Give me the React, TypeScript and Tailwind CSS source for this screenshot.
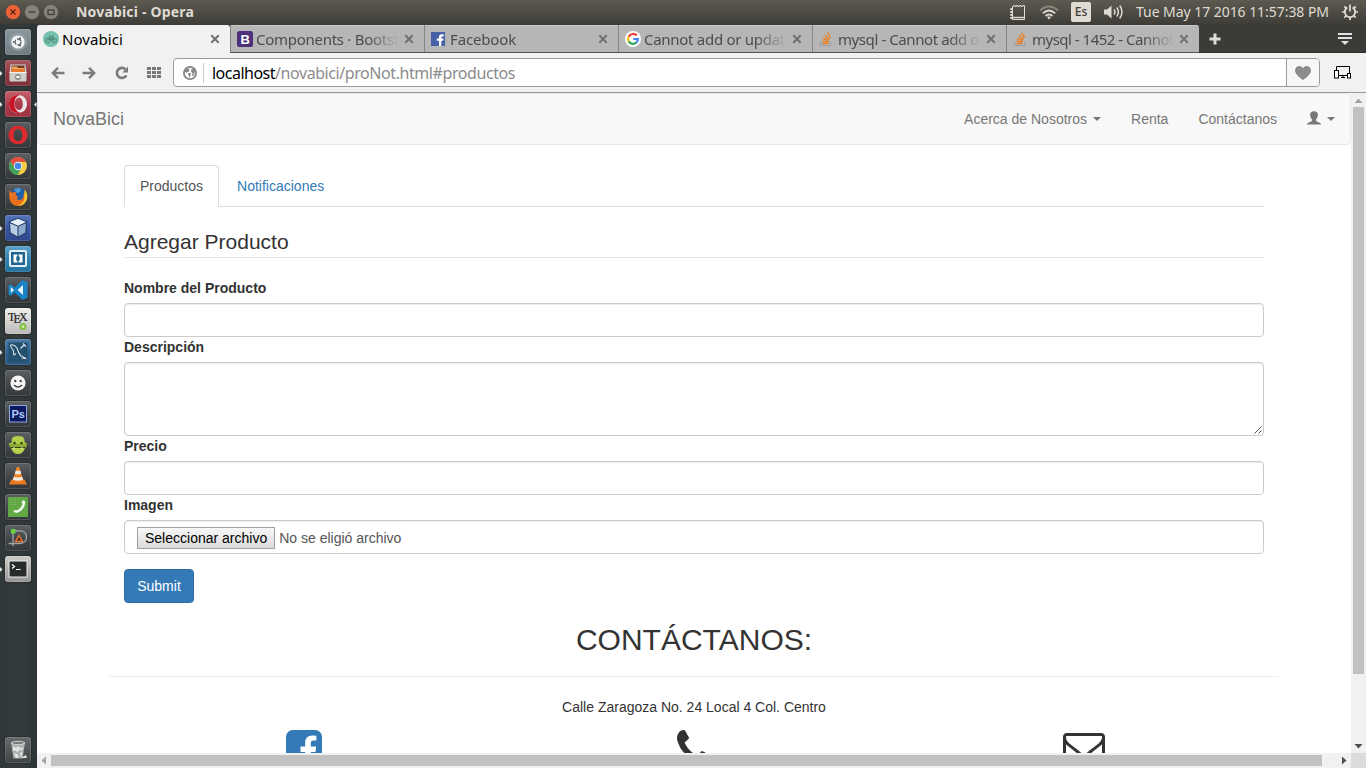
import { useLayoutEffect, useRef, type ReactNode } from "react";

/** Text whose letter spacing is set so that it fills a given width. */
function FitText({ width, className = "", children }: { width: number; className?: string; children: string }) {
  const ref = useRef<HTMLSpanElement>(null);
  useLayoutEffect(() => {
    const el = ref.current;
    if (!el) return;
    el.style.letterSpacing = "0px";
    const natural = el.getBoundingClientRect().width;
    el.style.letterSpacing = `${(width - natural) / children.length}px`;
  }, [width, children]);
  return (
    <span ref={ref} className={`inline-block whitespace-pre ${className}`}>
      {children}
    </span>
  );
}

const UI = "font-['Noto_Sans','Open_Sans',sans-serif]";

/* ---------- Launcher ---------- */

type App = { name: string; tile: string; running?: boolean; focused?: boolean; icon: ReactNode };

const DARK = "bg-linear-to-b from-[#5d6062] via-[#444749] to-[#35383a]";

const apps: App[] = [
  {
    name: "Dash",
    tile: "bg-linear-to-b from-[#8b989e] to-[#6d7b82]",
    icon: (
      <>
        <circle cx="13" cy="13" r="9" fill="#a9b4b9" opacity=".45" />
        <circle cx="13" cy="13" r="6.6" fill="#f4f6f6" />
        <circle cx="13" cy="13" r="3" fill="none" stroke="#5d686d" strokeWidth="1.3" strokeDasharray="5.2 1.1" />
        <circle cx="8.9" cy="13" r="1.1" fill="#5d686d" />
        <circle cx="15" cy="9.4" r="1.1" fill="#5d686d" />
        <circle cx="15" cy="16.6" r="1.1" fill="#5d686d" />
      </>
    ),
  },
  {
    name: "Files",
    tile: "bg-linear-to-b from-[#a95860] via-[#8b3843] to-[#7c303b]",
    running: true,
    icon: (
      <>
        <path d="M5.5 4.500h15l1 8h-17z" fill="#d7d3cc" />
        <path d="M6.500 5.500h13V12h-13z" fill="#6c3a22" />
        <path d="M7 6.500h5l1 1.500h6V12H7z" fill="#f2a55b" />
        <path d="M6.500 9h13v3h-13z" fill="#e8792d" />
        <rect x="4.500" y="12" width="17" height="9.500" rx="1" fill="#cfcdc8" />
        <path d="M4.500 12.500h17" stroke="#f3f2ef" />
        <circle cx="13" cy="17" r="3" fill="#8d8c88" />
        <path d="M11 16h4l-.5 2h-3z" fill="#f5f5f3" />
      </>
    ),
  },
  {
    name: "Opera",
    tile: "bg-linear-to-b from-[#c2636e] via-[#ad3b4a] to-[#9c3341]",
    running: true,
    focused: true,
    icon: (
      <>
        <path fillRule="evenodd" d="M13 4C7.500 4 4 8 4 13s3.500 9 9 9 9-4 9-9-3.500-9-9-9zm1 2.500c2.500 0 3.800 3 3.800 6.500s-1.300 6-3.800 6-4.300-2.800-4.300-6S11.500 6.500 14 6.500z" fill="#e9e5e6" />
        <path d="M13 4C7.500 4 4 8 4 13s3.500 9 9 9l2.500-.4c-3.800-.5-6-4-6-8.600S11 5.200 14.500 4.200z" fill="#c81427" />
      </>
    ),
  },
  {
    name: "Opera browser",
    tile: DARK,
    icon: (
      <path
        fillRule="evenodd"
        d="M13 3.700C7.500 3.700 3.500 7.800 3.500 13s4 9.300 9.500 9.300 9.500-4.100 9.500-9.300-4-9.300-9.500-9.300zm0 3.100c2.600 0 4.300 2.800 4.300 6.200s-1.700 6.200-4.300 6.200-4.300-2.800-4.300-6.200 1.700-6.200 4.300-6.200z"
        fill="#dc2a2e"
      />
    ),
  },
  {
    name: "Chrome",
    tile: DARK,
    icon: (
      <>
        <circle cx="13" cy="13" r="9" fill="#f7cf45" />
        <path d="M5.300 8.300A9 9 0 0 1 21 9H13a4 4 0 0 0-3.600 5.600z" fill="#de4f41" />
        <path d="M5.300 8.300A9 9 0 0 0 12.600 22l3.700-6.800A4 4 0 0 1 9.500 15z" fill="#3fa25a" />
        <circle cx="13" cy="13" r="4.200" fill="#f3f5f3" />
        <circle cx="13" cy="13" r="3.300" fill="#4587e8" />
      </>
    ),
  },
  {
    name: "Firefox",
    tile: DARK,
    icon: (
      <>
        <circle cx="13.500" cy="12.500" r="8.500" fill="#1f5faa" />
        <path d="M9 5.500q3-2.500 7-1l-1 3.500-3 1z" fill="#4f9bd6" />
        <path d="M4.500 6.500 7.500 9q2-1.500 4-.5L10.500 11l3 2-2 1.500q1.500 2.300 4.500 1 3-1.600 2.500-5 2-1 1.500-4 3.500 5 1 10-2.500 5.500-8 5.500-7 0-8.500-7.500-.6-4 0-8z" fill="#e9701c" />
        <path d="M19.500 5.500q4.500 5.500 2 11-2.500 5-8 5.500 6-3.500 5.800-9z" fill="#f9c52b" />
      </>
    ),
  },
  {
    name: "VirtualBox",
    tile: "bg-linear-to-b from-[#5775b8] via-[#3856a0] to-[#2d478b]",
    running: true,
    icon: (
      <>
        <path d="m13 2.800 9 3.700-.7 11.500L13 23l-8.300-5L4 6.500z" fill="#1d3566" />
        <path d="m13 3.800 8 3.200-8 3.700L5 7z" fill="#e9f1f8" />
        <path d="M5 8.200l7.500 3.300V21.500L5.700 17.500z" fill="#b7cbe2" />
        <path d="m21 8.200-7.500 3.300V21.500l6.800-4z" fill="#8ba9cb" />
      </>
    ),
  },
  {
    name: "Brackets",
    tile: "bg-linear-to-b from-[#5da4c9] via-[#2f82ae] to-[#24719c]",
    running: true,
    icon: (
      <>
        <rect x="5" y="5" width="16" height="15" rx="1" fill="#1e6690" stroke="#e4eff5" strokeWidth="2" />
        <rect x="8.500" y="8.500" width="9" height="8" fill="#fff" />
        <path d="M11.300 10.500h3.400v4h-3.400zM12.300 8.500h1.400v8h-1.400z" fill="#1e6690" />
      </>
    ),
  },
  {
    name: "Visual Studio Code",
    tile: DARK,
    icon: (
      <>
        <path d="M17.500 3 22.500 5.200v15.600L17.500 23l-7.800-7.500-3.900 3.300L3.500 17.500v-9l2.300-1.300 3.900 3.300z" fill="#1a82c6" />
        <path d="m18 8-5.500 5L18 18zM5.800 10v6L9 13z" fill="#e9f4fb" />
      </>
    ),
  },
  {
    name: "TeX",
    tile: "bg-linear-to-b from-[#f0f0ee] to-[#b9bab7]",
    icon: (
      <>
        <g fontFamily="Liberation Serif" fontSize="12" fill="#222" stroke="#222" strokeWidth=".2">
          <text x="3" y="12.500">T</text>
          <text x="8.500" y="14.500">E</text>
          <text x="14" y="12.500">X</text>
        </g>
        <circle cx="18" cy="18.500" r="3.500" fill="#83bd45" />
        <circle cx="18" cy="18.500" r="1.500" fill="#c9e4a5" />
      </>
    ),
  },
  {
    name: "MySQL Workbench",
    tile: "bg-linear-to-b from-[#4b7da7] via-[#2f618d] to-[#265780]",
    running: true,
    icon: (
      <>
        <path d="M3.500 3.500h19v19h-19z" fill="#24506f" />
        <path d="M5.500 6q3.500-1 6.500 3 1.500 5.500 4 8 2.500.5 4.500 2.500l-4-.5M5.500 6q.5 3.500 2.500 4.500l1 5.500 2-1.500M15.500 9.500l4-4M18 4.500l3 3" fill="none" stroke="#d7e3ec" strokeWidth="1.100" />
      </>
    ),
  },
  {
    name: "Empathy",
    tile: DARK,
    icon: (
      <>
        <circle cx="13" cy="13" r="7.600" fill="#f5f5f5" />
        <circle cx="10.300" cy="11" r="1.200" fill="#444" />
        <circle cx="15.700" cy="11" r="1.200" fill="#444" />
        <path d="M9 15q4 4 8 0" fill="none" stroke="#444" strokeWidth="1.300" />
      </>
    ),
  },
  {
    name: "Photoshop",
    tile: DARK,
    icon: (
      <>
        <rect x="4.500" y="4.500" width="17" height="16.500" fill="#0b1a5e" stroke="#8ba7e8" strokeWidth="1" />
        <text x="6.500" y="17" fontFamily="Liberation Sans" fontWeight="bold" fontSize="11" fill="#b4cbfb">Ps</text>
      </>
    ),
  },
  {
    name: "Monster",
    tile: DARK,
    icon: (
      <>
        <path d="M7 10q-1-4 2-5.500 4-1 8 0 3 1.500 2.500 5.500l2 1.500-1.500 4.500q-2 6-7 6t-7-6L4.500 11.500z" fill="#b4cf4c" />
        <path d="M3.500 11.500h19L21 16H5z" fill="#8eac34" />
        <circle cx="9.500" cy="11" r="1.200" fill="#26340c" />
        <circle cx="16.500" cy="11" r="1.200" fill="#26340c" />
        <path d="M5.500 15.500h15" stroke="#26340c" strokeWidth=".9" />
        <path d="m8 15.500 1 2 1-2zM16 15.500l1 2 1-2z" fill="#fff" />
      </>
    ),
  },
  {
    name: "VLC",
    tile: DARK,
    icon: (
      <>
        <path d="M6.500 16.500h13L22 21.500H4z" fill="#e67920" />
        <path d="M11.800 4h2.400l4.300 14q-5.500 2.300-11 0z" fill="#f18425" />
        <path d="m10.800 7.500-1 3.200q3.200 1.200 6.400 0l-1-3.200q-2.200.9-4.400 0zM8.800 13.700l-.9 3q5 1.900 10.200 0l-.9-3q-4.200 1.600-8.400 0z" fill="#eeebe7" />
      </>
    ),
  },
  {
    name: "Phone",
    tile: DARK,
    icon: (
      <>
        <rect x="3" y="3" width="20" height="20" fill="#62a844" />
        <path d="M5 5.500h7M5 8h7M5 10.500h6" fill="none" stroke="#85c16d" strokeDasharray="1 1.500" />
        <path d="m18 6 2.200 1.500q.3 8-8.200 11.500L8.500 18l.8-2 2.700.3q4.500-2.300 5.500-6.300l-1-1.500z" fill="#f1f8ed" />
      </>
    ),
  },
  {
    name: "Draw",
    tile: DARK,
    icon: (
      <>
        <path d="M8 7v14M3.500 18.500h10q8 0 8-6.500t-8-6H8" fill="none" stroke="#9fa3a3" strokeWidth="1.300" />
        <rect x="6" y="4" width="4.500" height="4.500" fill="#69d344" />
        <path d="m14 10.500 3.500 6h-7z" fill="#4b2d20" stroke="#ea7435" strokeWidth="1.400" />
      </>
    ),
  },
  {
    name: "Terminal",
    tile: "bg-linear-to-b from-[#cbcbc9] to-[#969694]",
    running: true,
    icon: (
      <>
        <rect x="4" y="5" width="18" height="16" fill="#292c2d" stroke="#efefed" strokeWidth="1" />
        <path d="m7 8.500 2.500 2L7 12.500M11 13.500h4.500" fill="none" stroke="#fff" strokeWidth="1.200" />
      </>
    ),
  },
];

function Tile({ tile, icon }: { tile: string; icon: ReactNode }) {
  return (
    <div className={`h-[26px] w-[26px] overflow-hidden rounded-[3px] shadow-[inset_0_0_0_1px_rgba(255,255,255,0.13),0_0_2px_rgba(0,0,0,0.6)] ${tile}`}>
      <svg viewBox="0 0 26 26" className="h-[26px] w-[26px]">
        {icon}
      </svg>
    </div>
  );
}

function Launcher() {
  return (
    <aside className="flex w-[37px] shrink-0 flex-col bg-linear-to-r from-[#303739] via-[#343b3d] to-[#2d3436] pt-[5px] pb-[5px]">
      <div className="flex flex-col gap-[5px]">
        {apps.map((app) => (
          <div key={app.name} className="flex h-[26px] items-center">
            <span className="flex w-[5px] items-center">
              {app.running && (
                <svg viewBox="0 0 3 6" className="h-[5px] w-[2.500px]">
                  <path d="M0 0 3 3 0 6z" fill="#e8e8e8" />
                </svg>
              )}
            </span>
            <Tile tile={app.tile} icon={app.icon} />
            {app.focused && (
              <svg viewBox="0 0 3 6" className="ml-[3px] h-[5px] w-[2.500px]">
                <path d="M3 0 0 3l3 3z" fill="#e8e8e8" />
              </svg>
            )}
          </div>
        ))}
      </div>
      <div className="mt-auto pl-[5px]">
        <Tile
          tile="bg-linear-to-b from-[#676a6b] to-[#3f4344]"
          icon={
            <>
              <path d="M6 5.500h14l-2.500 16h-9z" fill="#aeb1b1" />
              <path d="m8 9 3 2 2-2 3 2.500 2-2-.5 4-3-1-2 2.500-3-2-1.500 1.500zM9 16l3 1 2 3-3 1zM15 16l2.500-1-1 5z" fill="#e5e6e6" />
              <ellipse cx="13" cy="5.800" rx="7.200" ry="2" fill="#d4d6d6" />
              <ellipse cx="13" cy="5.900" rx="5.600" ry="1.100" fill="#777b7b" />
              <path d="m17 20 4-2 1 3h-5z" fill="#dedfdf" />
            </>
          }
        />
      </div>
    </aside>
  );
}

/* ---------- System bar ---------- */

function WindowButton({ kind }: { kind: "close" | "min" | "max" }) {
  return (
    <svg viewBox="0 0 16 16" className="h-4 w-4">
      <circle cx="8" cy="8" r="7.500" fill={kind === "close" ? "#ee6338" : "#85827a"} stroke="#4a4842" strokeWidth=".6" />
      {kind === "close" && <path d="m5.500 5.500 5 5m0-5-5 5" stroke="#57240f" strokeWidth="1.300" />}
      {kind === "min" && <path d="M4.500 8h7" stroke="#3b3a35" strokeWidth="1.200" />}
      {kind === "max" && <rect x="5" y="6" width="6" height="4.500" fill="none" stroke="#3b3a35" strokeWidth="1.200" />}
    </svg>
  );
}

function SystemBar() {
  return (
    <header className={`flex h-6 shrink-0 items-center bg-linear-to-b from-[#5d5a50] to-[#3e3d38] text-[#dfdbd2] ${UI}`}>
      <div className="flex gap-[3px] pl-[5px]">
        <WindowButton kind="close" />
        <WindowButton kind="min" />
        <WindowButton kind="max" />
      </div>
      <FitText width={118} className="ml-[17px] text-[14px] leading-6 font-bold">
        Novabici - Opera
      </FitText>
      <div className="ml-auto flex items-center">
        <svg viewBox="0 0 17 17" className="h-[17px] w-[17px]" fill="none" stroke="#dfdbd2">
          <path d="M3.500 15.500V2.500h1v-1h1.500v1h1.500v-1H9v1h1.500v-1H12v1h1.500v-1h2v14z" />
          <path d="M3.500 4.500h-2v1h2m0 2h-2v1h2m0 2h-2v1h2m0 2h-2v1h2" />
          <path d="M4 13.500h11" strokeWidth="1.500" />
        </svg>
        <svg viewBox="0 0 20 15" className="ml-[13px] h-[15px] w-5" fill="none" strokeWidth="1.700">
          <path d="M1 5.500q9-8 18 0" stroke="#8b887e" />
          <path d="M3.800 8.300q6.200-5.600 12.400 0" stroke="#dfdbd2" />
          <path d="M6.500 11q3.500-3 7 0" stroke="#dfdbd2" />
          <path d="m8 12.300 2 2.200 2-2.200q-2-1.400-4 0z" fill="#dfdbd2" stroke="none" />
        </svg>
        <span className="ml-[12px] flex h-5 w-5 items-center justify-center rounded-[2px] bg-[#dfdbd2] text-[12px] font-medium text-[#3e3d38]">
          Es
        </span>
        <svg viewBox="0 0 21 16" className="ml-[12px] h-4 w-[21px]" fill="none" stroke="#dfdbd2" strokeWidth="1.500">
          <path d="M1 5.500h3l4.500-4v13L4 10.500H1z" fill="#dfdbd2" stroke="none" />
          <path d="M11 5.500q1.800 2.500 0 5M13.800 3.500q3.200 4.500 0 9M16.700 1.500q4.600 6.500 0 13" />
        </svg>
        <FitText width={193} className="ml-[12px] text-[14px] leading-6">
          Tue May 17 2016 11:57:38 PM
        </FitText>
        <svg viewBox="0 0 18 18" className="mr-[7px] ml-[12px] h-[18px] w-[18px]" fill="none" stroke="#dfdbd2">
          <path d="M6.400 4.400a5.200 5.200 0 1 0 5.200 0" strokeWidth="1.900" />
          <path d="M9 1.500v7M1 9h3M14 9h3M3.300 3.300l2 2M14.700 3.300l-2 2M3.300 14.700l2-2M14.700 14.700l-2-2M9 14v3" strokeWidth="1.700" />
        </svg>
      </div>
    </header>
  );
}

/* ---------- Browser tabs ---------- */

function CloseMark() {
  return (
    <svg viewBox="0 0 10 10" className="h-[10px] w-[10px]">
      <path d="m1.300 1.300 7.400 7.400m0-7.400-7.400 7.400" stroke="#707070" strokeWidth="2" />
    </svg>
  );
}

const StackIcon = (
  <svg viewBox="0 0 16 16" className="h-4 w-4" fill="none">
    <path d="M1.500 10.500v4h10v-4" stroke="#9aa0a6" strokeWidth="1.200" />
    <path d="M3.500 12.500h6M3.600 10.200l6 .7M4.200 7.500l5.700 2M5.700 4.500l5 3.700M8.300 1.700l3.400 5" stroke="#ee7d20" strokeWidth="1.400" />
  </svg>
);

const tabs: { title: string; width: number; icon: ReactNode }[] = [
  {
    title: "Components · Bootst",
    width: 143,
    icon: (
      <svg viewBox="0 0 16 16" className="h-4 w-4">
        <rect width="16" height="16" rx="2.500" fill="#4e3178" />
        <text x="3.500" y="13" fontFamily="Liberation Sans" fontWeight="bold" fontSize="13" fill="#fff">B</text>
      </svg>
    ),
  },
  {
    title: "Facebook",
    width: 66,
    icon: (
      <svg viewBox="0 0 14 14" className="h-[14px] w-[14px]">
        <rect width="14" height="14" fill="#4661a5" />
        <path d="M8 14V8.700H5.800V6.500H8V5q0-2.700 2.700-2.700h2V4.500h-1.400q-1 0-1 1v1h2.200l-.3 2.200h-1.900V14z" fill="#fff" />
      </svg>
    ),
  },
  {
    title: "Cannot add or updat",
    width: 141,
    icon: (
      <svg viewBox="0 0 16 16" className="h-4 w-4">
        <circle cx="8" cy="8" r="8" fill="#fff" />
        <g fill="none" strokeWidth="2.200">
          <path d="M11.800 4.500A5 5 0 0 0 3.700 5.700" stroke="#ea4335" />
          <path d="M3.700 5.700a5 5 0 0 0 0 4.700" stroke="#fbbc05" />
          <path d="M3.700 10.400a5 5 0 0 0 7.600 1.300" stroke="#34a853" />
          <path d="M11.300 11.700A5 5 0 0 0 12.900 8H8.300" stroke="#4285f4" />
        </g>
      </svg>
    ),
  },
  { title: "mysql - Cannot add o", width: 141, icon: StackIcon },
  { title: "mysql - 1452 - Cannot", width: 142, icon: StackIcon },
];

function TabStrip() {
  return (
    <div className={`flex h-[29px] shrink-0 bg-[#3c3b37] pt-px text-[15px] ${UI}`}>
      <div className="flex h-7 w-[193px] items-center rounded-t-[3px] bg-[#f1f1f1] pr-[10px] pl-[6px] text-black">
        <svg viewBox="0 0 16 16" className="h-4 w-4 shrink-0">
          <circle cx="8" cy="8" r="8" fill="#74c1ad" />
          <g fill="none" stroke="#4b7f75" strokeWidth=".9">
            <circle cx="4.700" cy="9.500" r="2.200" />
            <circle cx="11.300" cy="9.500" r="2.200" />
            <path d="M4.700 9.500 6.500 6h3l1.800 3.500M6.500 6 8 9.500 9.500 6M6 5h1.500m1.500 0h2" />
          </g>
        </svg>
        <FitText width={61} className="ml-[3px] pt-px">
          Novabici
        </FitText>
        <span className="ml-auto">
          <CloseMark />
        </span>
      </div>
      <div className="flex h-7 overflow-hidden rounded-tr-[3px] border-b border-[#555]">
        {tabs.map((tab) => (
          <div key={tab.title} className="flex w-[194px] items-center border-l border-[#858585] bg-[#b6b6b6] pr-[10px] pl-[6px] text-[#4c4c4c] shadow-[inset_0_1px_0_#c9c9c9] last:w-[193px]">
            <span className="w-4 shrink-0">{tab.icon}</span>
            <span className="ml-[3px] w-[143px] overflow-hidden pt-[2px] mask-[linear-gradient(to_right,black_78%,transparent_100%)]">
              <FitText width={tab.width}>{tab.title}</FitText>
            </span>
            <span className="-mr-px ml-auto last:mr-0">
              <CloseMark />
            </span>
          </div>
        ))}
      </div>
      <div className="flex flex-1 items-center justify-between border-b border-[#2e2d2a] pr-[14px] pl-[10px]">
        <svg viewBox="0 0 12 12" className="h-3 w-3">
          <path d="M6 .5v11M.5 6h11" stroke="#ddd" strokeWidth="3" />
        </svg>
        <svg viewBox="0 0 14 12" className="h-3 w-[14px]" fill="#e2e2e2">
          <path d="M0 0h14v2H0zM0 4h14v2H0zM3 8h8l-4 4z" />
        </svg>
      </div>
    </div>
  );
}

/* ---------- Address bar ---------- */

function Toolbar() {
  return (
    <div className="flex h-10 shrink-0 items-center border-b border-[#999] bg-[#f1f1f1] pr-[15px] pl-[14px]">
      <svg viewBox="0 0 14 12" className="h-3 w-[14px]" fill="none" stroke="#7b7b7b" strokeWidth="2.400">
        <path d="M13.500 6H2M7 .8 1.800 6 7 11.200" />
      </svg>
      <svg viewBox="0 0 14 12" className="ml-[17px] h-3 w-[14px]" fill="none" stroke="#7b7b7b" strokeWidth="2.400">
        <path d="M.5 6H12M7 .8 12.200 6 7 11.200" />
      </svg>
      <svg viewBox="0 0 14 14" className="ml-[19px] h-[14px] w-[14px]">
        <path d="M11.300 9.300A5 5 0 1 1 10.300 3.300" fill="none" stroke="#7b7b7b" strokeWidth="2.700" />
        <path d="M13 .5v6H7.300z" fill="#7b7b7b" />
      </svg>
      <svg viewBox="0 0 14 11" className="ml-[18px] h-[11px] w-[14px]" fill="#777">
        {[0, 4, 8].map((y) =>
          [0, 5, 10].map((x) => <rect key={`${x}-${y}`} x={x} y={y} width="4" height="3" />),
        )}
      </svg>
      <div className="ml-[12px] flex h-[29px] flex-1 items-center overflow-hidden rounded-[4px] border border-[#9b9b9b] bg-white">
        <svg viewBox="0 0 14 14" className="ml-[9px] h-[14px] w-[14px]">
          <circle cx="7" cy="7" r="6.100" fill="#fff" stroke="#858585" strokeWidth="1.800" />
          <path d="M1.500 5 3.500 3l3-.5-.5 1.700 1 .8-2.500 1L3.500 7zM5 7l3 .3L7.500 9.500 6.500 12 5.500 9zM8.500 3l2.500 0 1.500 3-1 .5L10.500 10 9 9.500 9.500 7 8 5.500z" fill="#858585" />
        </svg>
        <span className="ml-[6px] h-[20px] w-px bg-[#ccc]" />
        <div className={`ml-[8px] flex text-[16px] text-[#8c8c8c] ${UI}`}>
          <FitText width={63} className="text-black">
            localhost
          </FitText>
          <FitText width={240}>/novabici/proNot.html#productos</FitText>
        </div>
        <div className="ml-auto flex h-full w-[33px] items-center justify-center border-l border-[#9b9b9b] bg-[#f5f7f9]">
          <svg viewBox="0 0 16 14" className="h-[14px] w-4">
            <path d="M8 13.500Q.5 8.500.5 4.400.6.700 4.300.5 6.800.500 8 2.700 9.200.500 11.700.5q3.700.2 3.800 3.900 0 4.100-7.500 9.100z" fill="#8d8d8d" stroke="#777" strokeWidth=".8" />
          </svg>
        </div>
      </div>
      <svg viewBox="0 0 17 13" className="ml-[14px] h-[13px] w-[17px]" fill="#fff" stroke="#000">
        <path d="M2.500 5V.5h13V8M5 9.500h8" fill="none" />
        <rect x=".5" y="4.500" width="4" height="7.500" />
        <rect x="13.500" y="7.500" width="3" height="4.500" />
        <path d="M7 11.500h4M9 9.500v2" />
      </svg>
    </div>
  );
}

/* ---------- Page ---------- */

function Caret() {
  return <span className="inline-block h-0 w-0 border-x-4 border-t-4 border-x-transparent border-t-[#777]" />;
}

function Navbar() {
  return (
    <nav className="flex h-[52px] items-center rounded-[4px] border border-[#e7e7e7] bg-[#f8f8f8] pr-[15px] pl-[15px] text-[#777]">
      <span className="text-[18px] leading-5">NovaBici</span>
      <div className="ml-auto flex items-center gap-[30px] leading-5">
        <span className="flex items-center gap-[6px]">
          Acerca de Nosotros <Caret />
        </span>
        <span>Renta</span>
        <span>Contáctanos</span>
        <span className="flex items-center gap-[6px]">
          <svg viewBox="0 0 14 14" className="mb-[2px] h-[14px] w-[14px]" fill="#777">
            <path d="M7 .3q3.900 0 3.900 3.700 0 2.600-1.900 4.700v.9q.1.700 1.500 1.200 3.500 1.200 3.500 2.200v.5H0V13q0-1 3.500-2.200 1.400-.5 1.500-1.200v-.9Q3.100 6.600 3.100 4 3.100.3 7 .3z" />
          </svg>
          <Caret />
        </span>
      </div>
    </nav>
  );
}

const FIELD = "rounded-[4px] border border-[#ccc] bg-white shadow-[inset_0_1px_1px_rgba(0,0,0,0.075)]";

function Label({ children }: { children: string }) {
  return <div className="mb-[5px] leading-5 font-bold">{children}</div>;
}

function ProductForm() {
  return (
    <div className="flex flex-col px-[15px]">
      <div className="mt-5 flex h-[42px] border-b border-[#ddd] leading-5">
        <div className="mr-[2px] h-[42px] rounded-t-[4px] border border-b-0 border-[#ddd] bg-white px-[15px] pt-[10px] text-[#555]">Productos</div>
        <div className="px-4 pt-[11px] text-[#337ab7]">Notificaciones</div>
      </div>
      <h2 className="mt-5 mb-5 h-[31px] border-b border-[#e5e5e5] text-[21px] leading-[30px]">Agregar Producto</h2>
      <Label>Nombre del Producto</Label>
      <div className={`h-[34px] ${FIELD}`} />
      <Label>Descripción</Label>
      <div className={`flex h-[74px] items-end justify-end p-px ${FIELD}`}>
        <svg viewBox="0 0 8 8" className="h-2 w-2" fill="none" stroke="#555">
          <path d="M.5 7.500l7-7M4.500 7.500l3-3" />
        </svg>
      </div>
      <Label>Precio</Label>
      <div className={`h-[34px] ${FIELD}`} />
      <Label>Imagen</Label>
      <div className={`flex h-[34px] items-center px-3 pt-[2px] text-[#555] ${FIELD}`}>
        <span className="mr-1 flex h-[22px] items-center border border-[#a0a0a0] bg-linear-to-b from-[#f7f7f7] to-[#dcdcdc] px-[7px] text-black">
          Seleccionar archivo
        </span>
        No se eligió archivo
      </div>
      <button className="mt-[15px] h-[34px] w-[70px] rounded-[4px] border border-[#2e6da4] bg-[#337ab7] leading-5 text-white">Submit</button>
    </div>
  );
}

function ContactSection() {
  return (
    <section className="text-center">
      <h1 className="mt-5 h-[33px] text-[30px] leading-[33px]">CONTÁCTANOS:</h1>
      <hr className="mt-5 border-t border-[#eee]" />
      <p className="mt-5 leading-5">Calle Zaragoza No. 24 Local 4 Col. Centro</p>
      <div className="mt-[10px] grid grid-cols-3 justify-items-center">
        <svg viewBox="0 0 1536 1792" className="h-[42px] w-9" fill="#337ab7">
          <path d="M1248 128q119 0 203.500 84.500t84.500 203.500v960q0 119-84.500 203.500t-203.500 84.500h-188v-595h199l30-232h-229v-148q0-56 23.500-84t91.500-28l122-1v-207q-63-9-178-9-136 0-217.500 80t-81.500 226v171h-200v232h200v595h-532q-119 0-203.500-84.500t-84.500-203.500v-960q0-119 84.500-203.500t203.500-84.500h960z" />
        </svg>
        <svg viewBox="0 0 1408 1792" className="mr-px h-[42px] w-[33px]" fill="#333">
          <path d="M1408 1240q0 27-10 70.500t-21 68.500q-21 50-122 106-94 51-186 51-27 0-53-3.500t-57.500-12.500-47-14.500-55.500-20.500-49-18q-98-35-175-83-127-79-264-216t-216-264q-48-77-83-175-3-9-18-49t-20.500-55.500-14.500-47-12.500-57.500-3.500-53q0-92 51-186 56-101 106-122 25-11 68.500-21t70.500-10q14 0 21 3 18 6 53 76 11 19 30 54t35 63.500 31 53.500q3 4 17.500 25t21.500 35.500 7 28.500q0 20-28.500 50t-62 55-62 53-28.500 46q0 9 5 22.500t8.500 20.500 14 24 11.500 19q76 137 174 235t235 174q2 1 19 11.500t24 14 20.500 8.500 22.500 5q18 0 46-28.500t53-62 55-62 50-28.500q14 0 28.500 7t35.500 21.500 25 17.500q25 15 53.500 31t63.500 35 54 30q70 35 76 53 3 7 3 21z" />
        </svg>
        <svg viewBox="0 0 1792 1792" className="h-[42px] w-[42px]" fill="#333">
          <path d="M1664 1504v-768q-32 36-69 66-268 206-426 338-51 43-83 67t-86.500 48.500-102.500 24.500h-2q-48 0-102.500-24.500t-86.500-48.500-83-67q-158-132-426-338-37-30-69-66v768q0 13 9.500 22.500t22.500 9.500h1472q13 0 22.500-9.500t9.500-22.500zm0-1051v-24.500l-.5-13-3-12.500-5.500-9-9-7.500-14-2.500h-1472q-13 0-22.500 9.500t-9.500 22.500q0 168 147 284 193 152 401 317 6 5 35 29.500t46 37.500 44.500 31.500 50.500 27.500 43 9h2q20 0 43-9t50.500-27.500 44.500-31.500 46-37.500 35-29.500q208-165 401-317 54-43 100.500-115.500t46.500-131.500zm128-37v1088q0 66-47 113t-113 47h-1472q-66 0-113-47t-47-113v-1088q0-66 47-113t113-47h1472q66 0 113 47t47 113z" />
        </svg>
      </div>
    </section>
  );
}

function Arrow({ d, color }: { d: string; color: string }) {
  return (
    <svg viewBox="0 0 15 15" className="h-[15px] w-[15px] shrink-0" fill={color}>
      <path d={d} />
    </svg>
  );
}

function Viewport() {
  return (
    <div className="flex min-h-0 flex-1 flex-col">
      <div className="flex min-h-0 flex-1">
        <main className="min-w-0 flex-1 overflow-hidden bg-white font-['Liberation_Sans',Arial,sans-serif] text-[14px] text-[#333]">
          <Navbar />
          <div className="ml-[72px] w-[1170px]">
            <ProductForm />
            <ContactSection />
          </div>
        </main>
        <div className="flex w-[15px] flex-col items-center bg-[#f1f1f1]">
          <Arrow d="M3.500 10h8l-4-4.500z" color="#a3a3a3" />
          <div className="-mt-px h-[567px] w-[11px] bg-[#c1c1c1]" />
          <div className="mt-auto">
            <Arrow d="M3.500 6h8l-4 4.500z" color="#505050" />
          </div>
        </div>
      </div>
      <div className="flex h-[15px] shrink-0 items-center bg-[#f1f1f1]">
        <Arrow d="M9 3.500v8L4.500 7.500z" color="#a3a3a3" />
        <div className="-ml-px h-[11px] w-[1271px] bg-[#c1c1c1]" />
        <div className="ml-auto">
          <Arrow d="M6 3.500v8l4.500-4z" color="#505050" />
        </div>
        <div className="h-[15px] w-[15px] bg-[#dcdcdc]" />
      </div>
    </div>
  );
}

export default function App() {
  return (
    <div className="flex h-[768px] w-[1366px] flex-col overflow-hidden">
      <SystemBar />
      <div className="flex min-h-0 flex-1">
        <Launcher />
        <div className="flex min-w-0 flex-1 flex-col">
          <TabStrip />
          <Toolbar />
          <Viewport />
        </div>
      </div>
    </div>
  );
}
